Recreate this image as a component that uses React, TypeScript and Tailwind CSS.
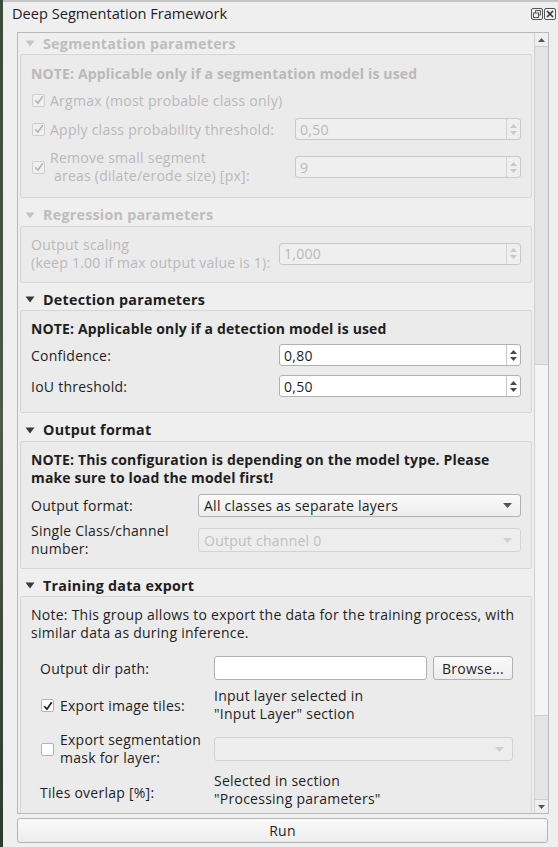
const font = { fontFamily: '"Open Sans", "DejaVu Sans", sans-serif' };

function Tri({ disabled }: { disabled?: boolean }) {
  return (
    <svg width="10" height="7" viewBox="0 0 10 7" className="shrink-0">
      <path d="M0.5 0.5 L9.5 0.5 L5 6.5 Z" fill={disabled ? "#c4c4c4" : "#3a3a3a"} />
    </svg>
  );
}

function GroupTitle({ label, disabled, first }: { label: string; disabled?: boolean; first?: boolean }) {
  return (
    <div className={`flex items-center h-[23px] pl-[5px] gap-[8px] ${first ? "" : "mt-[6px]"}`}>
      <Tri disabled={disabled} />
      <span className={`font-bold text-[14.3px] ${disabled ? "text-[#bdbdbd]" : "text-[#1e1e1e]"}`}>{label}</span>
    </div>
  );
}

function Frame({ children, className = "" }: { children: React.ReactNode; className?: string }) {
  return (
    <div className={`border border-[#d6d6d6] rounded-[2px] bg-[#ebebeb] px-[10px] ${className}`}>{children}</div>
  );
}

function Check({ checked, disabled }: { checked?: boolean; disabled?: boolean }) {
  return (
    <div
      className={`w-[13px] h-[13px] shrink-0 rounded-[2px] border flex items-center justify-center ${
        disabled ? "border-[#cfcfcf] bg-[#f0f0f0]" : "border-[#b3b3b3] bg-white"
      }`}
    >
      {checked && (
        <svg width="10" height="10" viewBox="0 0 10 10">
          <path
            d="M1.3 5.2 L3.9 8.2 L8.7 1.3"
            fill="none"
            stroke={disabled ? "#b5b5b5" : "#1e1e1e"}
            strokeWidth="1.7"
          />
        </svg>
      )}
    </div>
  );
}

function Spin({ value, disabled, className = "" }: { value: string; disabled?: boolean; className?: string }) {
  const c = disabled ? "#c9c9c9" : "#4a4a4a";
  return (
    <div
      className={`h-[22px] flex rounded-[3px] border ${
        disabled ? "border-[#c8c8c8] bg-[#efefef] text-[#b9b9b9]" : "border-[#b1b1b1] bg-white text-[#1e1e1e]"
      } ${className}`}
    >
      <div className="flex-1 flex items-center pl-[4px]">{value}</div>
      <div className={`w-[14px] border-l flex flex-col items-center justify-center gap-[3px] ${disabled ? "border-[#d4d4d4]" : "border-[#c8c8c8]"}`}>
        <svg width="7" height="4" viewBox="0 0 7 4">
          <path d="M0 4 L3.5 0 L7 4 Z" fill={c} />
        </svg>
        <svg width="7" height="4" viewBox="0 0 7 4">
          <path d="M0 0 L3.5 4 L7 0 Z" fill={c} />
        </svg>
      </div>
    </div>
  );
}

function Combo({ value, disabled, className = "" }: { value: string; disabled?: boolean; className?: string }) {
  return (
    <div
      className={`flex items-center rounded-[3px] border pl-[5px] pr-[8px] ${
        disabled
          ? "border-[#d3d3d3] bg-[#ededed] text-[#c0c0c0]"
          : "border-[#b1b1b1] bg-gradient-to-b from-[#fafafa] to-[#eeeeee] text-[#1e1e1e]"
      } ${className}`}
    >
      <span className="flex-1">{value}</span>
      <svg width="9" height="5" viewBox="0 0 9 5">
        <path d="M0 0 L9 0 L4.5 5 Z" fill={disabled ? "#cfcfcf" : "#555"} />
      </svg>
    </div>
  );
}

export default function App() {
  const dis = "text-[#b9b9b9]";
  const txt = "text-[#1e1e1e]";
  const note = "font-bold text-[14px] tracking-[0.15px]";
  return (
    <div
      className="w-[558px] h-[847px] flex bg-[#efefef] overflow-hidden text-[14px] tracking-[0.25px]"
      style={font}
    >
      <div className="w-[3px] bg-gradient-to-b from-[#3b4a3a] via-[#4f5a4a] to-[#2f3a30]" />
      <div className="flex-1 flex flex-col border-t-2 border-[#c4c4c4]">
        <div className="h-[30px] flex items-center pl-[9px] pr-[2px]">
          <span className="text-[14.6px] tracking-normal text-[#1e1e1e] flex-1 -mt-[6px]">Deep Segmentation Framework</span>
          <div className="flex gap-[1px] -mt-[6px]">
            <svg width="12" height="12" viewBox="0 0 12 12">
              <rect x="0.5" y="0.5" width="11" height="11" rx="1.5" fill="none" stroke="#555" />
              <rect x="2.5" y="5" width="5" height="4.5" fill="none" stroke="#555" />
              <path d="M4.5 5 V2.5 H9.5 V7 H7.5" fill="none" stroke="#555" />
            </svg>
            <svg width="12" height="12" viewBox="0 0 12 12">
              <rect x="0.5" y="0.5" width="11" height="11" rx="1.5" fill="none" stroke="#555" />
              <path d="M3 3 L9 9 M9 3 L3 9" stroke="#333" strokeWidth="1.6" />
            </svg>
          </div>
        </div>

        <div className="ml-[14px] w-[532px] h-[782px] border border-[#b9b9b9] flex overflow-hidden">
          <div className="flex-1 pl-[2px] pr-[2px] flex flex-col overflow-hidden">
            {/* Segmentation */}
            <GroupTitle label="Segmentation parameters" disabled first />
            <Frame className="pt-[8px] pb-[13px]">
              <div className={`h-[20px] flex items-center ${note} ${dis}`}>
                NOTE: Applicable only if a segmentation model is used
              </div>
              <div className={`h-[20px] mt-[7px] flex items-center gap-[5px] pl-[1px] ${dis}`}>
                <Check checked disabled />
                <span>Argmax (most probable class only)</span>
              </div>
              <div className="h-[22px] mt-[8px] flex items-center">
                <div className={`flex-1 flex items-center gap-[5px] pl-[1px] ${dis}`}>
                  <Check checked disabled />
                  <span>Apply class probability threshold:</span>
                </div>
                <Spin value="0,50" disabled className="w-[226px]" />
              </div>
              <div className="h-[34px] mt-[10px] flex items-center">
                <div className={`flex-1 flex items-center gap-[5px] pl-[1px] ${dis}`}>
                  <Check checked disabled />
                  <span className="leading-[18px]">
                    Remove small segment
                    <br />
                    &nbsp;areas (dilate/erode size) [px]:
                  </span>
                </div>
                <Spin value="9" disabled className="w-[226px]" />
              </div>
            </Frame>

            {/* Regression */}
            <GroupTitle label="Regression parameters" disabled />
            <Frame className="pt-[10px] pb-[11px]">
              <div className="h-[34px] flex items-center">
                <div className={`flex-1 leading-[18px] ${dis}`}>
                  Output scaling
                  <br />
                  (keep 1.00 if max output value is 1):
                </div>
                <Spin value="1,000" disabled className="w-[242px]" />
              </div>
            </Frame>

            {/* Detection */}
            <GroupTitle label="Detection parameters" />
            <Frame className={`pt-[7px] pb-[15px] ${txt}`}>
              <div className={`h-[20px] flex items-center ${note}`}>
                NOTE: Applicable only if a detection model is used
              </div>
              <div className="h-[22px] mt-[6px] flex items-center">
                <span className="flex-1">Confidence:</span>
                <Spin value="0,80" className="w-[242px]" />
              </div>
              <div className="h-[22px] mt-[9px] flex items-center">
                <span className="flex-1">IoU threshold:</span>
                <Spin value="0,50" className="w-[242px]" />
              </div>
            </Frame>

            {/* Output format */}
            <GroupTitle label="Output format" />
            <Frame className={`pt-[9px] pb-[10px] ${txt}`}>
              <div className={`leading-[18px] ${note}`}>
                NOTE: This configuration is depending on the model type. Please
                <br />
                make sure to load the model first!
              </div>
              <div className="h-[23px] mt-[7px] flex items-center">
                <span className="flex-1">Output format:</span>
                <Combo value="All classes as separate layers" className="w-[323px] h-[23px]" />
              </div>
              <div className="h-[35px] mt-[6px] flex items-center">
                <span className="flex-1 leading-[18px]">
                  Single Class/channel
                  <br />
                  number:
                </span>
                <Combo value="Output channel 0" disabled className="w-[323px] h-[24px]" />
              </div>
            </Frame>

            {/* Training data export */}
            <GroupTitle label="Training data export" />
            <Frame className={`pt-[9px] pb-[12px] ${txt} flex-1`}>
              <div className="leading-[18px]">
                Note: This group allows to export the data for the training process, with
                <br />
                similar data as during inference.
              </div>
              <div className="pl-[9px] pr-[8px]">
                <div className="h-[24px] mt-[14px] flex items-center">
                  <span className="w-[174px]">Output dir path:</span>
                  <div className="w-[213px] h-[24px] bg-white border border-[#b1b1b1] rounded-[3px]" />
                  <div className="ml-[6px] flex-1 h-[24px] rounded-[3px] border border-[#b1b1b1] bg-gradient-to-b from-[#fafafa] to-[#ededed] flex items-center justify-center">
                    Browse...
                  </div>
                </div>
                <div className="h-[37px] mt-[7px] flex items-center">
                  <div className="w-[174px] flex items-center gap-[6px] pl-[1px]">
                    <Check checked />
                    <span>Export image tiles:</span>
                  </div>
                  <span className="leading-[18px] -mt-[2px]">
                    Input layer selected in
                    <br />
                    "Input Layer" section
                  </span>
                </div>
                <div className="h-[36px] mt-[7px] flex items-center">
                  <div className="w-[174px] flex items-center gap-[6px] pl-[1px]">
                    <Check />
                    <span className="leading-[18px]">
                      Export segmentation
                      <br />
                      mask for layer:
                    </span>
                  </div>
                  <Combo value="" disabled className="flex-1 h-[24px]" />
                </div>
                <div className="h-[36px] mt-[5px] flex items-center">
                  <span className="w-[174px] pt-[5px]">Tiles overlap [%]:</span>
                  <span className="leading-[18px]">
                    Selected in section
                    <br />
                    "Processing parameters"
                  </span>
                </div>
              </div>
            </Frame>
          </div>

          {/* Scrollbar */}
          <div className="w-[14px] flex flex-col border-l border-[#d0d0d0] bg-[#e4e4e4]">
            <div className="h-[14px] flex items-center justify-center bg-[#efefef] border-b border-[#cfcfcf]">
              <svg width="7" height="4" viewBox="0 0 7 4">
                <path d="M0 4 L3.5 0 L7 4 Z" fill="#555" />
              </svg>
            </div>
            <div className="h-[317px]" />
            <div className="h-[352px] bg-[#f4f4f4] border-y border-[#cfcfcf]" />
            <div className="flex-1" />
            <div className="h-[14px] flex items-center justify-center bg-[#efefef] border-t border-[#cfcfcf]">
              <svg width="7" height="4" viewBox="0 0 7 4">
                <path d="M0 0 L3.5 4 L7 0 Z" fill="#555" />
              </svg>
            </div>
          </div>
        </div>

        <div className="ml-[14px] mt-[4px] w-[531px] h-[25px] rounded-[3px] border border-[#b3b3b3] bg-gradient-to-b from-[#fafafa] to-[#ececec] flex items-center justify-center text-[#1e1e1e]">
          Run
        </div>
      </div>
    </div>
  );
}
